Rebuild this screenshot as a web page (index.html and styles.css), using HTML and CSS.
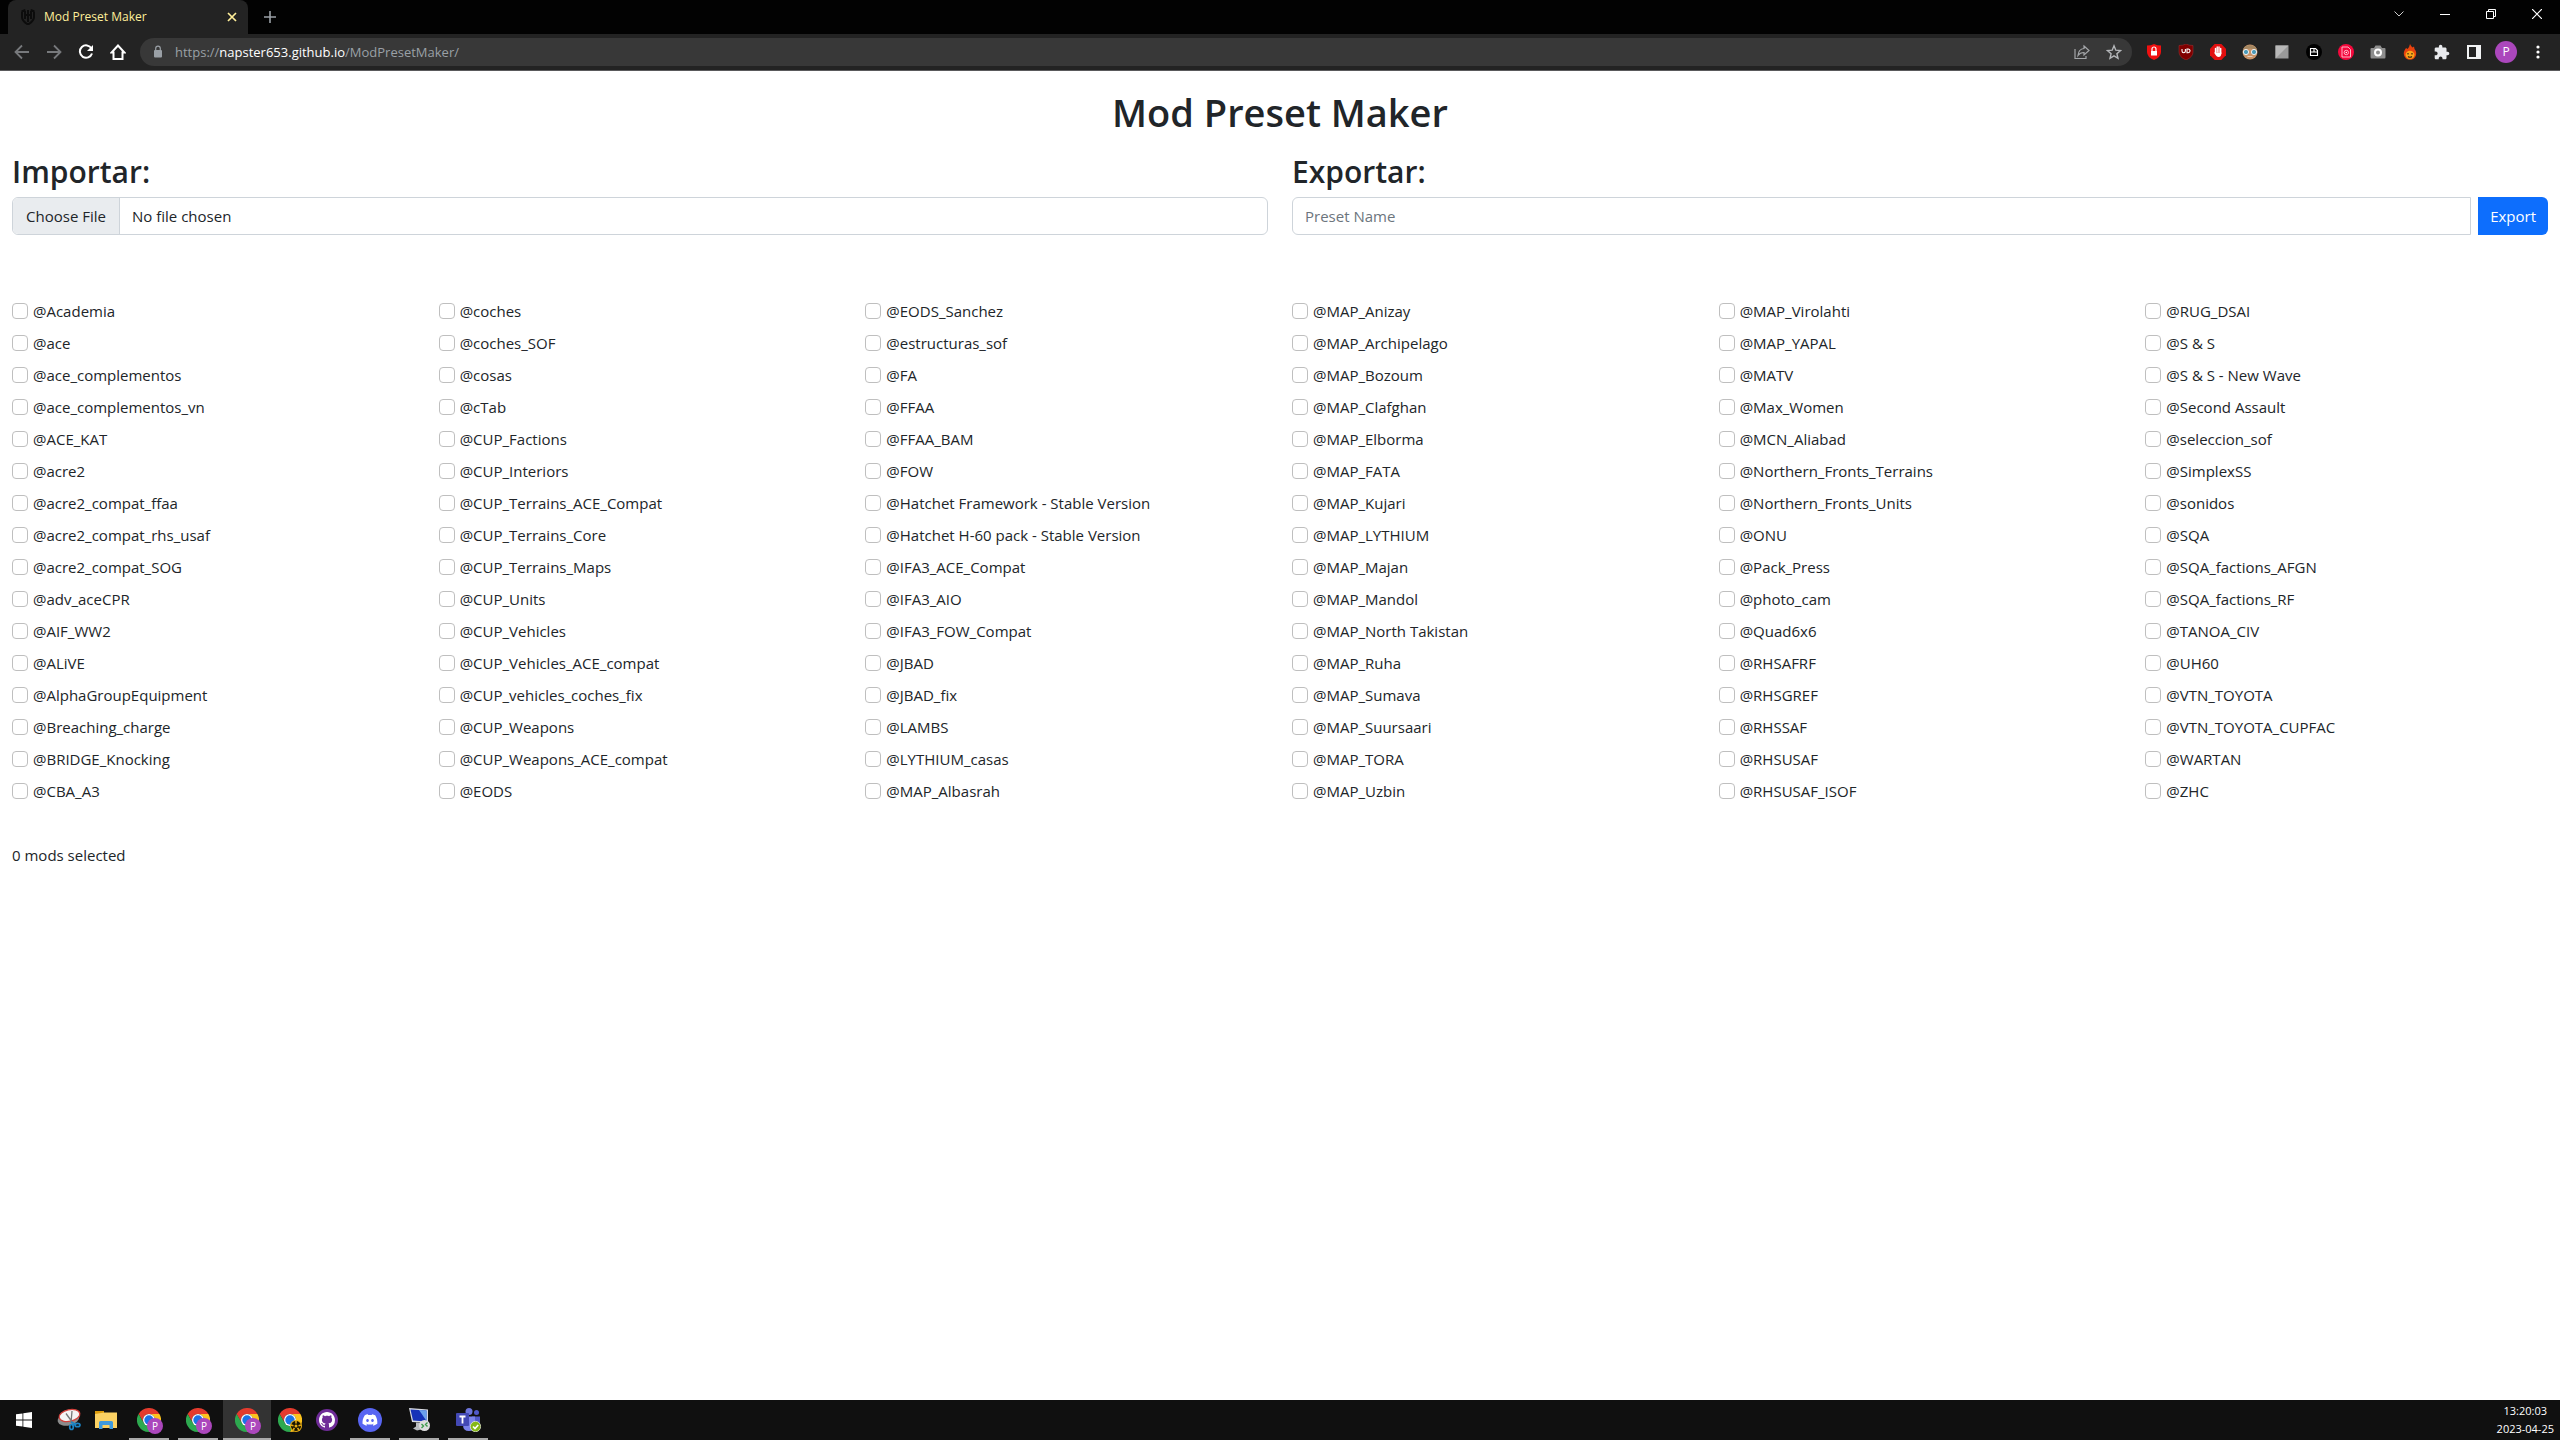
FILE: index.html
```html
<!DOCTYPE html>
<html lang="es">
<head>
<meta charset="utf-8">
<title>Mod Preset Maker</title>
<link rel="stylesheet" href="styles.css">
<script src="mods.js" defer></script>
</head>
<body>
<svg class="defs" aria-hidden="true">
  <symbol id="chrome" viewBox="0 0 48 48">
    <path fill="#e33b2e" d="M3.2 12A24 24 0 0 1 44.8 12H24A12 12 0 0 0 13.6 30Z"/>
    <path fill="#2da94f" d="M3.2 12L13.6 30A12 12 0 0 0 34.4 30L24 48A24 24 0 0 1 3.2 12Z"/>
    <path fill="#fcc31e" d="M44.8 12A24 24 0 0 1 24 48L34.4 30A12 12 0 0 0 24 12Z"/>
    <circle cx="24" cy="24" r="12" fill="#fff"/>
    <circle cx="24" cy="24" r="9.4" fill="#1a73e8"/>
  </symbol>
</svg>

<header class="browser">
  <div class="tabstrip">
    <div class="tab">
      <svg class="favicon" viewBox="0 0 16 16"><path d="M1.500 2Q4 2.500 5 .5M14.500 2Q12 2.500 11 .5M2 3v5q0 4 6 7.500Q14 12 14 8V3M5 2v8M8 1v12M11 2v8M5 6h6" fill="none" stroke="#0c0c0c" stroke-width="2"/></svg>
      <span class="tab-title">Mod Preset Maker</span>
      <button class="tab-close" aria-label="Close tab"><svg width="10" height="10" viewBox="0 0 10 10"><path d="M1 1l8 8M9 1L1 9" stroke="#ffef9a" stroke-width="1.700"/></svg></button>
    </div>
    <button class="new-tab" aria-label="New tab"><svg width="12" height="12" viewBox="0 0 12 12"><path d="M6 0v12M0 6h12" stroke="#9aa0a6" stroke-width="1.600"/></svg></button>
    <div class="caption">
      <button aria-label="Search tabs"><svg width="10" height="6" viewBox="0 0 10 6"><path d="M.5.5L5 5l4.500-4.500" fill="none" stroke="#ccc"/></svg></button>
      <button aria-label="Minimize"><svg width="10" height="10" viewBox="0 0 10 10"><path d="M0 5.500h10" stroke="#fff"/></svg></button>
      <button aria-label="Restore"><svg width="10" height="10" viewBox="0 0 10 10"><path d="M.5 2.500h7v7h-7zM2.500 2.500v-2h7v7h-2" fill="none" stroke="#fff"/></svg></button>
      <button aria-label="Close"><svg width="10" height="10" viewBox="0 0 10 10"><path d="M0 0l10 10M10 0L0 10" stroke="#fff" stroke-width="1.200"/></svg></button>
    </div>
  </div>
  <div class="toolbar">
    <div class="tools">
      <button aria-label="Back"><svg width="16" height="16" viewBox="0 0 16 16"><path d="M15 8H2M8 1.500L1.500 8 8 14.500" fill="none" stroke="#77797c" stroke-width="1.800"/></svg></button>
      <button aria-label="Forward"><svg width="16" height="16" viewBox="0 0 16 16"><path d="M1 8h13M8 1.500L14.500 8 8 14.500" fill="none" stroke="#77797c" stroke-width="1.800"/></svg></button>
      <button aria-label="Reload"><svg width="16" height="16" viewBox="0 0 16 16"><path d="M13.500 4.500A6.200 6.200 0 1 0 14 9.500" fill="none" stroke="#fff" stroke-width="2"/><path d="M15 1v6H9z" fill="#fff"/></svg></button>
      <button aria-label="Home"><svg width="16" height="16" viewBox="0 0 16 16"><path d="M8 1.500L1.500 8.500H3.500V15h9V8.500h2z" fill="none" stroke="#fff" stroke-width="2"/></svg></button>
    </div>
    <div class="address">
      <svg width="10" height="14" viewBox="0 0 10 14"><rect x="1" y="5" width="8" height="7.500" rx="1" fill="#9aa0a6"/><path d="M2.700 5V3.500a2.300 2.300 0 0 1 4.600 0V5" fill="none" stroke="#9aa0a6" stroke-width="1.200"/></svg>
      <span class="url">https://<b>napster653.github.io</b>/ModPresetMaker/</span>
      <button aria-label="Share"><svg width="16" height="16" viewBox="0 0 16 16"><path d="M1 5v9.500h11V12M10 2l5 4.500-5 4.500V8.500Q6 8.500 4 11.500 4.500 5 10 4.500z" fill="none" stroke="#a4a6a9" stroke-width="1.200"/></svg></button>
      <button aria-label="Bookmark"><svg width="16" height="16" viewBox="0 0 16 16"><path d="M8 1.800l1.800 4.400 4.700.4-3.600 3.100 1.100 4.600L8 11.800l-4 2.500 1.100-4.600L1.500 6.600l4.700-.4z" fill="none" stroke="#b4b6b9" stroke-width="1.400"/></svg></button>
    </div>
    <div class="tools">
      <button aria-label="Privacy lock"><svg width="16" height="16" viewBox="0 0 16 16"><path d="M8 0q3 1.500 7 1.500V8q0 5-7 8Q1 13 1 8V1.500Q5 1.500 8 0z" fill="#f01010"/><rect x="5" y="7" width="6" height="4.500" fill="#fff"/><path d="M6 7V5a2 2 0 0 1 4 0v2" fill="none" stroke="#fff" stroke-width="1.200"/></svg></button>
      <button aria-label="Content shield"><svg width="16" height="16" viewBox="0 0 16 16"><path d="M8 0q3 1.500 7 1.500V8q0 5-7 8Q1 13 1 8V1.500Q5 1.500 8 0z" fill="#800000" stroke="#a33" stroke-width=".5"/><path d="M4 5v2q0 1.700 1.700 1.700T7.400 7V5M9 5v3.700h1.200a1.800 1.800 0 0 0 0-3.700z" fill="none" stroke="#fff" stroke-width="1.100"/></svg></button>
      <button aria-label="Ad block"><svg width="16" height="16" viewBox="0 0 16 16"><path d="M4.700 0h6.600L16 4.700v6.600L11.300 16H4.700L0 11.300V4.700z" fill="#e20f0f"/><path d="M5.500 4.500v4M7.200 3v5M9 3v5M10.700 4.500v5" stroke="#fff" stroke-width="1.400" stroke-linecap="round"/><path d="M4 8.500h7.400q0 4.500-2.900 4.500Q6.500 13 4 8.500z" fill="#fff"/></svg></button>
      <button aria-label="Profile helper"><svg width="16" height="16" viewBox="0 0 16 16"><circle cx="8" cy="8" r="7.500" fill="#c99468"/><path d="M.8 6a7.500 6.500 0 0 1 14.400 0q-7-3-14.400 0z" fill="#a48762"/><circle cx="4" cy="8" r="2.600" fill="#4a9ab8" stroke="#eee"/><circle cx="12" cy="8" r="2.600" fill="#4a9ab8" stroke="#eee"/><path d="M5.500 12.500h5" stroke="#e8d0c0"/></svg></button>
      <button aria-label="Page tone"><svg width="16" height="16" viewBox="0 0 16 16"><path d="M1.500 1.500h13v13h-13z" fill="#999"/><path d="M1.500 1.500h13l-13 13z" fill="#b8b8b8"/></svg></button>
      <button aria-label="Save page"><svg width="16" height="16" viewBox="0 0 16 16"><circle cx="8" cy="8" r="8" fill="#000"/><path d="M4.500 4.500h5l2 2v5h-7zM4.500 8h7M8 4.500V8" fill="none" stroke="#fff" stroke-width="1.100"/></svg></button>
      <button aria-label="Page finder"><svg width="16" height="16" viewBox="0 0 16 16"><circle cx="8" cy="8" r="8" fill="#f5083c"/><path d="M4 3h6l2.500 2.500V13H4z" fill="none" stroke="#ffb5c5"/><circle cx="8.300" cy="8.500" r="2.200" fill="none" stroke="#ffb5c5"/><circle cx="8.300" cy="8.500" r=".8" fill="#fff"/></svg></button>
      <button aria-label="Screenshot"><svg width="16" height="16" viewBox="0 0 16 16"><path d="M1.500 4H4l1.500-2.500h5L12 4h2.500q1 0 1 1v8q0 1.500-1 1.500h-13q-1 0-1-1.500V5q0-1 1-1z" fill="#8e8e8e"/><circle cx="8" cy="8.500" r="3" fill="#8e8e8e" stroke="#fff" stroke-width="2"/></svg></button>
      <button aria-label="Flame"><svg width="16" height="16" viewBox="0 0 16 16"><path d="M8 0q1 2 2.500 3.500L12 2.500q0 2 1.500 4Q15.500 11 12 14.500 8 17 4 14.500 .5 11 2.500 6.500L4 4l1.500 1Q7.500 3 8 0z" fill="#e8420e"/><ellipse cx="8" cy="10.800" rx="4.500" ry="4" fill="#f9a51a"/><path d="M6 9v1.500M10 9v1.500M6 12.500q2 1.500 4 0" fill="none" stroke="#321" stroke-width="1.200"/></svg></button>
      <button aria-label="Extensions"><svg width="16" height="16" viewBox="1 0 23 23"><path fill="#e8eaed" d="M20.500 11H19V7c0-1.100-.9-2-2-2h-4V3.500C13 2.120 11.880 1 10.500 1S8 2.120 8 3.500V5H4c-1.100 0-1.990.9-1.990 2v3.800H3.500c1.490 0 2.700 1.210 2.700 2.700s-1.210 2.700-2.700 2.700H2V20c0 1.100.9 2 2 2h3.800v-1.500c0-1.490 1.210-2.700 2.700-2.700 1.490 0 2.700 1.210 2.700 2.700V22H17c1.100 0 2-.9 2-2v-4h1.500c1.380 0 2.500-1.120 2.500-2.500S21.880 11 20.500 11z"/></svg></button>
      <button aria-label="Side panel"><svg width="16" height="16" viewBox="0 0 16 16"><path fill="#f1f3f4" fill-rule="evenodd" d="M1 1h14v14H1zM3 3v10h7V3z"/></svg></button>
      <button aria-label="Profile"><span class="avatar">P</span></button>
      <button aria-label="Menu"><svg width="16" height="16" viewBox="0 0 16 16"><g fill="#fff"><circle cx="8" cy="3" r="1.600"/><circle cx="8" cy="8" r="1.600"/><circle cx="8" cy="13" r="1.600"/></g></svg></button>
    </div>
  </div>
</header>

<main class="page">
  <h1>Mod Preset Maker</h1>
  <div class="forms">
    <section>
      <h2><label for="preset-file">Importar:</label></h2>
      <input class="control" type="file" id="preset-file">
    </section>
    <section>
      <h2><label for="preset-name">Exportar:</label></h2>
      <div class="input-group">
        <input class="control preset-name" type="text" id="preset-name" placeholder="Preset Name">
        <button class="export">Export</button>
      </div>
    </section>
  </div>
  <div class="mods" id="mods"></div>
  <p class="count" id="count">0 mods selected</p>
</main>

<footer class="taskbar">
  <button class="start" aria-label="Start"><svg width="16" height="16" viewBox="0 0 16 16"><path fill="#fff" d="M0 2.300l6.500-.9v6.200H0zM7.300 1.300L16 0v7.600H7.300zM0 8.400h6.500v6.200L0 13.700zM7.300 8.400H16V16l-8.700-1.300z"/></svg></button>
  <button aria-label="Snipping Tool"><svg width="24" height="24" viewBox="0 0 24 24"><ellipse cx="11.500" cy="11" rx="11" ry="6.500" transform="rotate(-14 11.500 11)" fill="#8b8b8b"/><ellipse cx="12.500" cy="7.500" rx="10.500" ry="5.800" transform="rotate(-12 12.500 7.500)" fill="#f4f4f4" stroke="#d2413c" stroke-width="1.300"/><path d="M9 5.500l6.500 9M15 3l-1 12" stroke="#777" stroke-width="1.300"/><ellipse cx="14.500" cy="19" rx="1.800" ry="2.500" fill="none" stroke="#1b84c4" stroke-width="1.700"/><ellipse cx="20.500" cy="17" rx="2.500" ry="1.700" fill="none" stroke="#1b84c4" stroke-width="1.700"/><path d="M14 14l4 2-3 1.500" fill="none" stroke="#1b84c4" stroke-width="1.700"/></svg></button>
  <button aria-label="File Explorer"><svg width="24" height="24" viewBox="0 0 24 24"><path d="M1 3h9v3H1z" fill="#dc9b0b"/><path d="M1 6l9-1.500h13V20H1z" fill="#fbd163"/><path d="M5 21v-6.500q0-1.500 1.500-1.500h11q1.500 0 1.500 1.500V21h-3.500v-4h-7v4z" fill="#3e9ade"/></svg></button>
  <button class="window" aria-label="Chrome window 1"><span class="app"><svg width="24" height="24"><use href="#chrome"/></svg><span class="badge">P</span></span></button>
  <button class="window" aria-label="Chrome window 2"><span class="app"><svg width="24" height="24"><use href="#chrome"/></svg><span class="badge">P</span></span></button>
  <button class="window active" aria-label="Chrome window 3"><span class="app"><svg width="24" height="24"><use href="#chrome"/></svg><span class="badge">P</span></span></button>
  <button aria-label="Chrome"><svg width="24" height="24" viewBox="0 0 24 24"><use href="#chrome"/><circle cx="18" cy="18" r="6" fill="#e5ab12"/><circle cx="18" cy="18" r="5" fill="#181300"/><path d="M18 13v2.500M13 17l2.500.7M23 17l-2.500.7M15 22l1.500-2M21 22l-1.500-2" stroke="#e5ab12" stroke-width="1.600"/><circle cx="18" cy="18" r="1.500" fill="#e5ab12"/></svg></button>
  <button aria-label="GitHub Desktop"><svg width="22" height="22" viewBox="0 0 22 22"><circle cx="11" cy="11" r="11" fill="#6f2c98"/><path transform="translate(3 3)" fill="#fff" d="M8 0C3.580 0 0 3.580 0 8c0 3.540 2.290 6.530 5.470 7.590.4.070.55-.17.55-.38 0-.19-.01-.82-.01-1.490-2.010.37-2.530-.49-2.690-.94-.09-.23-.48-.94-.82-1.130-.28-.15-.68-.52-.01-.53.63-.01 1.080.58 1.230.82.72 1.210 1.870.87 2.330.66.07-.52.28-.87.51-1.070-1.780-.2-3.640-.89-3.640-3.950 0-.87.31-1.590.82-2.150-.08-.2-.36-1.020.08-2.120 0 0 .67-.21 2.200.82.64-.18 1.320-.27 2-.27s1.360.09 2 .27c1.530-1.040 2.200-.82 2.200-.82.44 1.100.16 1.920.08 2.120.51.56.82 1.270.82 2.150 0 3.070-1.870 3.750-3.650 3.950.29.25.54.73.54 1.480 0 1.070-.01 1.930-.01 2.200 0 .21.15.46.55.38A8.010 8.010 0 0 0 16 8c0-4.420-3.580-8-8-8z"/></svg></button>
  <button class="window" aria-label="Discord"><svg width="24" height="24" viewBox="0 0 24 24"><circle cx="12" cy="12" r="12" fill="#5865f2"/><path transform="translate(4.500 4.500) scale(.625)" fill="#fff" d="M20.317 4.370a19.791 19.791 0 0 0-4.885-1.515.074.074 0 0 0-.079.037c-.21.375-.444.864-.608 1.250a18.270 18.270 0 0 0-5.487 0 12.640 12.640 0 0 0-.617-1.250.077.077 0 0 0-.079-.037A19.736 19.736 0 0 0 3.677 4.370C.533 9.046-.32 13.580.099 18.058a20.030 20.030 0 0 0 6.025 3.030c.462-.63.874-1.295 1.226-1.994a13.100 13.100 0 0 1-1.872-.892l.372-.292c3.928 1.793 8.180 1.793 12.062 0l.373.292a12.300 12.300 0 0 1-1.873.892c.36.698.772 1.362 1.225 1.993a19.900 19.900 0 0 0 6.030-3.029c.5-5.177-.838-9.674-3.350-13.688zM8.020 15.330c-1.183 0-2.157-1.085-2.157-2.419s.955-2.419 2.157-2.419c1.210 0 2.176 1.095 2.157 2.420 0 1.333-.956 2.418-2.157 2.418zm7.975 0c-1.183 0-2.157-1.085-2.157-2.419s.955-2.419 2.157-2.419c1.210 0 2.176 1.095 2.157 2.420 0 1.333-.946 2.418-2.157 2.418z"/></svg></button>
  <button class="window" aria-label="Remote Desktop"><svg width="24" height="24" viewBox="0 0 24 24"><path d="M2 0l19 1.500V15L5 14z" fill="#d8dbe2"/><path d="M3.500 1.500l16 1V13.500L6 12.500z" fill="#1632b8"/><path d="M12 2l7.500.5V13z" fill="#6aa0ee"/><path d="M9 14.500l5 .5v3l2 3-6 1.500-4-2 3-2z" fill="#b9bcc0"/><circle cx="17.500" cy="17.500" r="5.500" fill="#ddd"/><path d="M14.500 16l2 2-2 2M20.500 14.500l-2 2 2 2" fill="none" stroke="#3c9a4a" stroke-width="1.400"/></svg></button>
  <button class="window" aria-label="Teams"><svg width="26" height="24" viewBox="0 0 26 24"><circle cx="14" cy="3.500" r="3.500" fill="#6d75dc"/><circle cx="21.500" cy="4.500" r="2.500" fill="#5059c9"/><path d="M17 8.500h8V15q0 4-4 4h-4z" fill="#5059c9"/><path d="M8 8.500h12V17q0 6-6 6t-6-6z" fill="#7b83eb"/><rect x="1" y="5" width="13" height="13" rx="1" fill="#4349b5"/><path d="M4.500 8.500h6M7.500 8.500v7" stroke="#fff" stroke-width="1.800"/><circle cx="20.500" cy="18.500" r="5.200" fill="#86b817" stroke="#fff" stroke-width=".6"/><path d="M18 18.500l2 2 3.200-3.500" fill="none" stroke="#fff" stroke-width="1.600"/></svg></button>
  <time class="clock" datetime="2023-04-25T13:20:03"><span>13:20:03</span><span>2023-04-25</span></time>
</footer>
</body>
</html>
```
FILE: styles.css
```css
* { box-sizing: border-box; }

body {
  margin: 0;
  min-height: 100vh;
  display: flex;
  flex-direction: column;
  background: #fff;
  color: #212529;
  font: 15px/24px "Open Sans", "Noto Sans", sans-serif;
}

button {
  border: 0;
  padding: 0;
  background: none;
  font: inherit;
  color: inherit;
}

svg { display: block; flex: none; }
.defs { position: absolute; width: 0; height: 0; }

/* Browser frame */
.browser { background: #232323; border-bottom: 1px solid #5a5a5c; }

.tabstrip {
  display: flex;
  height: 34px;
  padding-left: 8px;
  background: #020202;
}

.tab {
  display: flex;
  align-items: center;
  width: 240px;
  padding: 0 11px 0 12px;
  gap: 8px;
  background: #232323;
  border-radius: 8px 8px 0 0;
}

.favicon { width: 16px; height: 16px; }
.tab-title { flex: 1; color: #ffef9a; font-size: 12px; }
.tab-close, .new-tab { display: flex; align-items: center; }
.new-tab { padding: 0 16px; }

.caption { display: flex; margin-left: auto; height: 28px; }
.caption button {
  width: 46px;
  display: flex;
  align-items: center;
  justify-content: center;
}

.toolbar {
  display: flex;
  align-items: center;
  gap: 6px;
  height: 36px;
  padding: 0 6px;
}

.tools { display: flex; }
.tools button, .address button {
  width: 32px;
  height: 28px;
  display: flex;
  align-items: center;
  justify-content: center;
}

.address {
  flex: 1;
  display: flex;
  align-items: center;
  height: 28px;
  padding: 0 2px 0 13px;
  border-radius: 14px;
  background: #383838;
}

.url { flex: 1; margin-left: 12px; color: #9aa0a6; font-size: 13px; }
.url b { font-weight: 400; color: #fff; }

.avatar {
  width: 22px;
  height: 22px;
  border-radius: 50%;
  background: #ab47bc;
  color: #fff;
  font-size: 12px;
  line-height: 22px;
}

/* Preset page */
.page { flex: 1; padding: 17px 12px; }

h1, h2 { margin: 0; font-weight: 600; }
h1 { font-size: 38px; line-height: 48px; text-align: center; }
h2 { margin-bottom: 4px; font-size: 30px; line-height: 42px; }

.forms { display: grid; grid-template-columns: 1fr 1fr; gap: 24px; padding-top: 15px; }

.control {
  display: block;
  width: 100%;
  height: 38px;
  padding: 6px 12px;
  border: 1px solid #ced4da;
  border-radius: 6px;
  background: #fff;
  color: #212529;
  font: inherit;
}

.control::placeholder { color: #6c757d; }

.control::file-selector-button {
  width: 107px;
  height: 36px;
  margin: -6px 12px -6px -12px;
  padding: 0 12px;
  border: 0;
  border-right: 1px solid #ced4da;
  border-radius: 5px 0 0 5px;
  background: #e9ecef;
  color: #212529;
  font: inherit;
}

.input-group { display: flex; gap: 7px; }
.preset-name { flex: 1; border-radius: 6px 0 0 6px; }
.export {
  padding: 0 12px;
  border-radius: 0 6px 6px 0;
  background: #0d6efd;
  color: #fff;
}

.mods {
  display: grid;
  grid-template-columns: repeat(6, 1fr);
  grid-template-rows: repeat(16, 24px);
  grid-auto-flow: column;
  row-gap: 8px;
  margin: 64px -12px 0;
}

.mod { display: flex; align-items: center; gap: 5px; padding: 0 12px; white-space: nowrap; }

.mod input {
  appearance: none;
  width: 16px;
  height: 16px;
  margin: 0;
  border: 1px solid #bfbfbf;
  border-radius: 4px;
  background: #fff;
}

.mod input:checked { background: #0d6efd; border-color: #0d6efd; }

.count { margin: 40px 0 0; }

/* Taskbar */
.taskbar {
  display: flex;
  gap: 1px;
  height: 40px;
  background: #101010;
  color: #fff;
}

.taskbar button {
  width: 36px;
  display: flex;
  align-items: center;
  justify-content: center;
}

.taskbar .start { width: 50px; padding-right: 2px; }

.taskbar .window {
  width: 48px;
  background: linear-gradient(#aaa, #aaa) bottom / 40px 2px no-repeat;
}

.taskbar .active { background-color: #333; background-size: 48px 2px; }

.app { position: relative; }
.badge {
  position: absolute;
  right: -2px;
  bottom: -2px;
  width: 16px;
  height: 16px;
  border-radius: 50%;
  background: #ab47bc;
  font-size: 10px;
  line-height: 16px;
}

.clock {
  display: flex;
  flex-direction: column;
  align-items: center;
  margin-left: auto;
  padding: 2px 6px;
  font-size: 11px;
  line-height: 18px;
}
```
FILE: mods.js
```js
const mods = [
  "@Academia", "@ace", "@ace_complementos", "@ace_complementos_vn", "@ACE_KAT", "@acre2",
  "@acre2_compat_ffaa", "@acre2_compat_rhs_usaf", "@acre2_compat_SOG", "@adv_aceCPR",
  "@AIF_WW2", "@ALiVE", "@AlphaGroupEquipment", "@Breaching_charge", "@BRIDGE_Knocking", "@CBA_A3",

  "@coches", "@coches_SOF", "@cosas", "@cTab", "@CUP_Factions", "@CUP_Interiors",
  "@CUP_Terrains_ACE_Compat", "@CUP_Terrains_Core", "@CUP_Terrains_Maps", "@CUP_Units",
  "@CUP_Vehicles", "@CUP_Vehicles_ACE_compat", "@CUP_vehicles_coches_fix", "@CUP_Weapons",
  "@CUP_Weapons_ACE_compat", "@EODS",

  "@EODS_Sanchez", "@estructuras_sof", "@FA", "@FFAA", "@FFAA_BAM", "@FOW",
  "@Hatchet Framework - Stable Version", "@Hatchet H-60 pack - Stable Version",
  "@IFA3_ACE_Compat", "@IFA3_AIO", "@IFA3_FOW_Compat", "@JBAD", "@JBAD_fix", "@LAMBS",
  "@LYTHIUM_casas", "@MAP_Albasrah",

  "@MAP_Anizay", "@MAP_Archipelago", "@MAP_Bozoum", "@MAP_Clafghan", "@MAP_Elborma", "@MAP_FATA",
  "@MAP_Kujari", "@MAP_LYTHIUM", "@MAP_Majan", "@MAP_Mandol", "@MAP_North Takistan", "@MAP_Ruha",
  "@MAP_Sumava", "@MAP_Suursaari", "@MAP_TORA", "@MAP_Uzbin",

  "@MAP_Virolahti", "@MAP_YAPAL", "@MATV", "@Max_Women", "@MCN_Aliabad", "@Northern_Fronts_Terrains",
  "@Northern_Fronts_Units", "@ONU", "@Pack_Press", "@photo_cam", "@Quad6x6", "@RHSAFRF",
  "@RHSGREF", "@RHSSAF", "@RHSUSAF", "@RHSUSAF_ISOF",

  "@RUG_DSAI", "@S & S", "@S & S - New Wave", "@Second Assault", "@seleccion_sof", "@SimplexSS",
  "@sonidos", "@SQA", "@SQA_factions_AFGN", "@SQA_factions_RF", "@TANOA_CIV", "@UH60",
  "@VTN_TOYOTA", "@VTN_TOYOTA_CUPFAC", "@WARTAN", "@ZHC"
];

const list = document.getElementById("mods");
const count = document.getElementById("count");

mods.forEach((name, i) => {
  const row = document.createElement("div");
  row.className = "mod";
  const box = document.createElement("input");
  box.type = "checkbox";
  box.id = "mod-" + i;
  const label = document.createElement("label");
  label.htmlFor = box.id;
  label.textContent = name;
  row.append(box, label);
  list.append(row);
});

list.addEventListener("change", () => {
  count.textContent = list.querySelectorAll("input:checked").length + " mods selected";
});
```
